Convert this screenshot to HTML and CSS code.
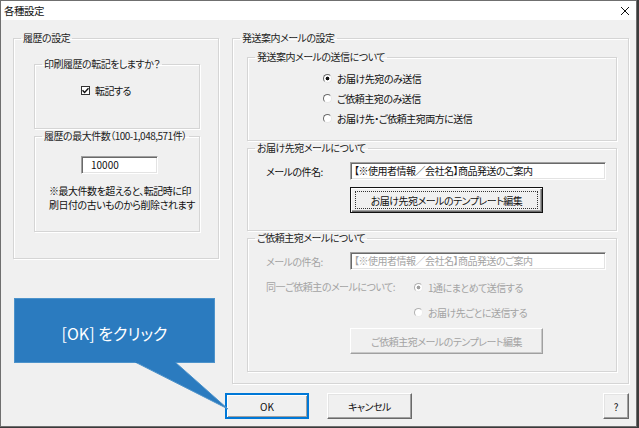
FILE: index.html
```html
<!DOCTYPE html>
<html lang="ja">
<head>
<meta charset="utf-8">
<title>各種設定</title>
<link rel="stylesheet" href="styles.css">
</head>
<body>
<div class="window">
  <div class="titlebar">
    <span class="title">各種設定</span>
    <svg class="close" width="10" height="10" viewBox="0 0 10 10"><path d="M1 1L9 9M9 1L1 9" stroke="#111" stroke-width="1"/></svg>
  </div>
  <div class="client">
    <div class="groups">
      <fieldset class="group left-group">
        <legend>履歴の設定</legend>
        <div class="body left-body">
          <fieldset class="group transfer">
            <legend>印刷履歴の転記をしますか？</legend>
            <div class="body transfer-body">
              <div class="check-row"><span class="checkbox"><svg width="7" height="7" viewBox="0 0 7 7"><path d="M0.5 3.2L2.6 5.4L6.5 1.2" fill="none" stroke="#111" stroke-width="1.4"/></svg></span><span>転記する</span></div>
            </div>
          </fieldset>
          <fieldset class="group maxcount">
            <legend>履歴の最大件数（100-1,048,571件）</legend>
            <div class="body maxcount-body">
              <div class="textbox count">10000</div>
              <p class="note"><span>※最大件数を超えると、転記時に印</span><span>刷日付の古いものから削除されます</span></p>
            </div>
          </fieldset>
        </div>
      </fieldset>

      <fieldset class="group right-group">
        <legend>発送案内メールの設定</legend>
        <div class="body right-body">
          <fieldset class="group send">
            <legend>発送案内メールの送信について</legend>
            <div class="body send-body">
              <div class="radio-row"><span class="radio checked"></span><span>お届け先宛のみ送信</span></div>
              <div class="radio-row"><span class="radio"></span><span>ご依頼主宛のみ送信</span></div>
              <div class="radio-row"><span class="radio"></span><span>お届け先・ご依頼主宛両方に送信</span></div>
            </div>
          </fieldset>
          <fieldset class="group dest">
            <legend>お届け先宛メールについて</legend>
            <div class="body form-body">
              <div class="form-grid">
                <span class="field-label">メールの件名:</span>
                <div class="textbox subject">【※使用者情報／会社名】商品発送のご案内</div>
                <span></span>
                <button class="btn template default focus"><span>お届け先宛メールのテンプレート編集</span></button>
              </div>
            </div>
          </fieldset>
          <fieldset class="group client-mail disabled">
            <legend>ご依頼主宛メールについて</legend>
            <div class="body form-body">
              <div class="form-grid">
                <span class="field-label">メールの件名:</span>
                <div class="textbox subject">【※使用者情報／会社名】商品発送のご案内</div>
                <span class="field-label same">同一ご依頼主のメールについて:</span>
                <div class="radio-col">
                  <div class="radio-row"><span class="radio checked"></span><span>1通にまとめて送信する</span></div>
                  <div class="radio-row"><span class="radio"></span><span>お届け先ごとに送信する</span></div>
                </div>
                <span></span>
                <button class="btn template"><span>ご依頼主宛メールのテンプレート編集</span></button>
              </div>
            </div>
          </fieldset>
        </div>
      </fieldset>
    </div>
    <div class="buttons">
      <button class="btn ok">OK</button>
      <button class="btn cancel">キャンセル</button>
      <button class="btn help">?</button>
    </div>
  </div>
  <div class="callout"><span>[OK] をクリック</span></div>
  <svg class="callout-tail" width="105" height="55" viewBox="0 0 105 55"><polygon points="5,1 45,1 98,48" fill="#2b7bbf" stroke="#4d93cb" stroke-width="1"/><rect x="5.5" y="0" width="40" height="2" fill="#2b7bbf"/></svg>
</div>
</body>
</html>
```

FILE: styles.css
```css
* { box-sizing: border-box; }

html, body {
  margin: 0;
  padding: 0;
}

body {
  width: 639px;
  height: 428px;
  background: #3b3b3b;
  font-family: "Noto Sans CJK JP", "Noto Sans", sans-serif;
  font-size: 10px;
  letter-spacing: -0.5px;
  font-feature-settings: "palt";
  color: #111;
  overflow: hidden;
}

.window {
  position: relative;
  width: 637px;
  height: 427px;
  border: 1px solid #6f6f6f;
  background: #f0f0f0;
  display: flex;
  flex-direction: column;
}

.titlebar {
  height: 19px;
  background: #fff;
  display: flex;
  align-items: center;
  justify-content: space-between;
  padding: 0 6px 0 3px;
  flex: none;
}

.title {
  font-size: 10.5px;
  line-height: 19px;
  color: #111;
}

.close { display: block; }

.client {
  flex: 1;
  padding: 11px 7px 0 12px;
  display: flex;
  flex-direction: column;
}

.groups {
  display: flex;
  align-items: flex-start;
  gap: 13px;
}

fieldset.group {
  margin: 0;
  padding: 0;
  min-width: 0;
  border: 1px solid #d5d5d5;
  box-shadow: 1px 1px 0 #fff, inset 1px 1px 0 #fff;
}

fieldset.group > legend {
  margin-left: 7px;
  padding: 0 2px;
  line-height: 14px;
  color: #222;
  white-space: nowrap;
}

.body { display: flex; flex-direction: column; }

/* left column */
.left-group { width: 206px; height: 228px; }
.left-body { padding: 12px 18px 0 20px; }

.transfer { height: 72px; }
.transfer-body { padding: 9px 0 0 46px; }

.check-row {
  display: flex;
  align-items: center;
  height: 20px;
  gap: 5px;
}

.checkbox {
  width: 9px;
  height: 9px;
  border: 1px solid #333;
  background: #fff;
  display: flex;
  align-items: center;
  justify-content: center;
}
.checkbox svg { display: block; }

.maxcount { height: 103px; margin-top: 11px; }
.maxcount-body { padding: 13px 0 0 46px; }

.textbox {
  background: #fff;
  height: 18px;
  border: 1px solid;
  border-color: #a0a0a0 #fff #fff #a0a0a0;
  box-shadow: inset 1px 1px 0 #696969, inset -1px -1px 0 #e3e3e3;
  line-height: 16px;
  white-space: nowrap;
  overflow: hidden;
}

.count {
  width: 77px;
  padding-left: 9px;
  letter-spacing: 0;
}

.note {
  margin: 10px 0 0 -32px;
  line-height: 14px;
  display: flex;
  flex-direction: column;
  white-space: nowrap;
}

/* right column */
.right-group { width: 397px; height: 353px; }
.right-body { padding: 5px 11px 0 14px; }

.send { height: 91px; }
.send-body { padding: 4px 0 0 75px; }

.radio-row {
  display: flex;
  align-items: center;
  height: 20px;
  gap: 5px;
  white-space: nowrap;
}

.radio {
  width: 9px;
  height: 9px;
  border-radius: 50%;
  border: 1px solid;
  border-color: #6a6a6a #e6e6e6 #e6e6e6 #6a6a6a;
  background: #fff;
  flex: none;
}
.radio.checked {
  background: radial-gradient(circle, #111 0 1.6px, #fff 2.2px);
}

.dest { height: 90px; margin-top: 5px; }
.form-body { padding: 7px 0 0 18px; }

.form-grid {
  display: grid;
  grid-template-columns: 84px 256px;
  align-items: center;
  row-gap: 7px;
}

.field-label { white-space: nowrap; }

.subject {
  width: 256px;
  padding-left: 3px;
}

.btn {
  font-family: inherit;
  font-size: 10px;
  letter-spacing: -0.5px;
  font-feature-settings: "palt";
  color: #111;
  background: #f0f0f0;
  border: 1px solid;
  border-color: #fff #696969 #696969 #fff;
  box-shadow: inset -1px -1px 0 #a0a0a0, inset 1px 1px 0 #e3e3e3;
  padding: 0;
  margin: 0;
  height: 26px;
  display: flex;
  align-items: center;
  justify-content: center;
}

.btn.template { width: 193px; }

.btn.default {
  border-color: #111;
  box-shadow: inset 1px 1px 0 #fff, inset -1px -1px 0 #696969, inset -2px -2px 0 #a0a0a0;
}
.btn.focus span {
  display: flex;
  align-items: center;
  justify-content: center;
  width: 183px;
  height: 18px;
  border: 1px dotted #333;
}

.client-mail { height: 141px; margin-top: 6px; }

.disabled .field-label,
.disabled .radio-row,
.disabled .subject,
.disabled .btn {
  color: #a3a3a3;
}
.disabled .radio { border-color: #b0b0b0 #ececec #ececec #b0b0b0; }
.disabled .radio.checked {
  background: radial-gradient(circle, #a0a0a0 0 1.6px, #fff 2.2px);
}
.disabled .btn {
  border-color: #fff #a0a0a0 #a0a0a0 #fff;
  box-shadow: inset -1px -1px 0 #c8c8c8;
}

.form-grid .same { align-self: start; line-height: 20px; }

.radio-col {
  display: flex;
  flex-direction: column;
  gap: 5px;
  padding-left: 64px;
}

.client-mail .btn.template { margin-top: -1px; }

/* bottom buttons */
.buttons {
  display: flex;
  margin-top: 9px;
  padding-left: 212px;
}

.btn.ok {
  width: 84px;
  letter-spacing: 0;
  border-color: #0078d7;
  box-shadow: inset 0 0 0 1px #0078d7, inset 1px 1px 0 1px #fff, inset -2px -2px 0 #a0a0a0;
}
.btn.cancel { width: 85px; margin-left: 18px; }
.btn.help { width: 26px; margin-left: auto; letter-spacing: 0; }

/* overlay callout */
.callout {
  position: absolute;
  left: 13px;
  top: 297px;
  width: 201px;
  height: 65px;
  background: #2b7bbf;
  border: 1px solid #4d93cb;
  color: #fff;
  font-size: 16px;
  letter-spacing: 0;
  display: flex;
  align-items: center;
  justify-content: center;
  padding-top: 5px;
}

.callout-tail {
  position: absolute;
  left: 129px;
  top: 360px;
}
```
